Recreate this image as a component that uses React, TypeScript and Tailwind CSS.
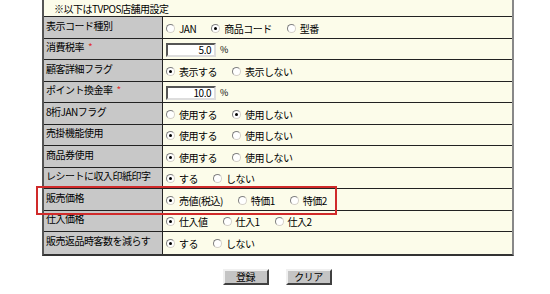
import React from "react";

type Opt = { label: string; checked?: boolean };

const Radio = ({ checked }: { checked?: boolean }) => (
  <span className="relative inline-block w-[9px] h-[9px] rounded-full border border-t-[#808080] border-l-[#808080] border-r-[#d4d0c8] border-b-[#d4d0c8] bg-white shrink-0">
    {checked && (
      <span className="absolute left-[2px] top-[2px] w-[3px] h-[3px] rounded-full bg-black" />
    )}
  </span>
);

const Radios = ({ options }: { options: Opt[] }) => (
  <div className="flex items-center gap-[15px]">
    {options.map((o) => (
      <label key={o.label} className="flex items-center gap-[4px]">
        <Radio checked={o.checked} />
        <span>{o.label}</span>
      </label>
    ))}
  </div>
);

const NumInput = ({ value }: { value: string }) => (
  <div className="flex items-center gap-[4px]">
    <div className="w-[50px] h-[14px] bg-white border-2 border-t-[#555] border-l-[#555] border-r-[#ddd] border-b-[#ddd] text-right pr-[3px] leading-[10px] text-[10px]">
      {value}
    </div>
    <span className="text-[9px]">%</span>
  </div>
);

const Req = () => <span className="text-[#e0302c] ml-[4px]">*</span>;

const rows: { label: React.ReactNode; value: React.ReactNode }[] = [
  {
    label: "表示コード種別",
    value: (
      <Radios
        options={[{ label: "JAN" }, { label: "商品コード", checked: true }, { label: "型番" }]}
      />
    ),
  },
  {
    label: (
      <>
        消費税率<Req />
      </>
    ),
    value: <NumInput value="5.0" />,
  },
  {
    label: "顧客詳細フラグ",
    value: <Radios options={[{ label: "表示する", checked: true }, { label: "表示しない" }]} />,
  },
  {
    label: (
      <>
        ポイント換金率<Req />
      </>
    ),
    value: <NumInput value="10.0" />,
  },
  {
    label: "8桁JANフラグ",
    value: <Radios options={[{ label: "使用する" }, { label: "使用しない", checked: true }]} />,
  },
  {
    label: "売掛機能使用",
    value: <Radios options={[{ label: "使用する", checked: true }, { label: "使用しない" }]} />,
  },
  {
    label: "商品券使用",
    value: <Radios options={[{ label: "使用する", checked: true }, { label: "使用しない" }]} />,
  },
  {
    label: "レシートに収入印紙印字",
    value: <Radios options={[{ label: "する", checked: true }, { label: "しない" }]} />,
  },
  {
    label: "販売価格",
    value: (
      <Radios
        options={[{ label: "売値(税込)", checked: true }, { label: "特価1" }, { label: "特価2" }]}
      />
    ),
  },
  {
    label: "仕入価格",
    value: (
      <Radios options={[{ label: "仕入値", checked: true }, { label: "仕入1" }, { label: "仕入2" }]} />
    ),
  },
  {
    label: "販売返品時客数を減らす",
    value: <Radios options={[{ label: "する", checked: true }, { label: "しない" }]} />,
  },
];

const Button = ({ children }: { children: React.ReactNode }) => (
  <button className="w-[46px] h-[16px] bg-[#c4c4c4] border-2 border-t-[#f0f0f0] border-l-[#f0f0f0] border-r-[#404040] border-b-[#404040] text-[10px] leading-[10px] text-black">
    {children}
  </button>
);

export default function App() {
  return (
    <div
      className="w-[550px] h-[294px] bg-white overflow-hidden text-[10px] tracking-[-0.5px] text-black"
      style={{ fontFamily: '"Noto Sans CJK JP", "Liberation Sans", sans-serif' }}
    >
      <div className="relative ml-[42px] w-[472px]">
        <div className="border-l-2 border-r-2 border-l-[#555] border-r-[#888] border-b-2 border-b-[#333]">
          <div className="h-[17px] flex items-center pl-[10px] bg-[#fcfcea] border-b border-[#222]">
            ※以下はTVPOS店舗用設定
          </div>
          {rows.map((r, i) => (
            <div
              key={i}
              className="flex h-[21.5px] border-b border-[#222] last:border-b-0"
            >
              <div className="w-[119px] shrink-0 bg-[#c8c8c8] border-r border-[#222] flex items-center pl-[2px] pb-[4px]">
                {r.label}
              </div>
              <div className="flex-1 bg-[#fcfcea] flex items-center pl-[3px] pt-[2px]">
                {r.value}
              </div>
            </div>
          ))}
        </div>
        <div className="absolute left-[-6px] top-[186px] w-[301px] h-[29px] border-2 border-[#d02a2a] pointer-events-none" />
      </div>
      <div className="flex justify-center gap-[17px] mt-[13px] pl-[4px]">
        <Button>登録</Button>
        <Button>クリア</Button>
      </div>
    </div>
  );
}
